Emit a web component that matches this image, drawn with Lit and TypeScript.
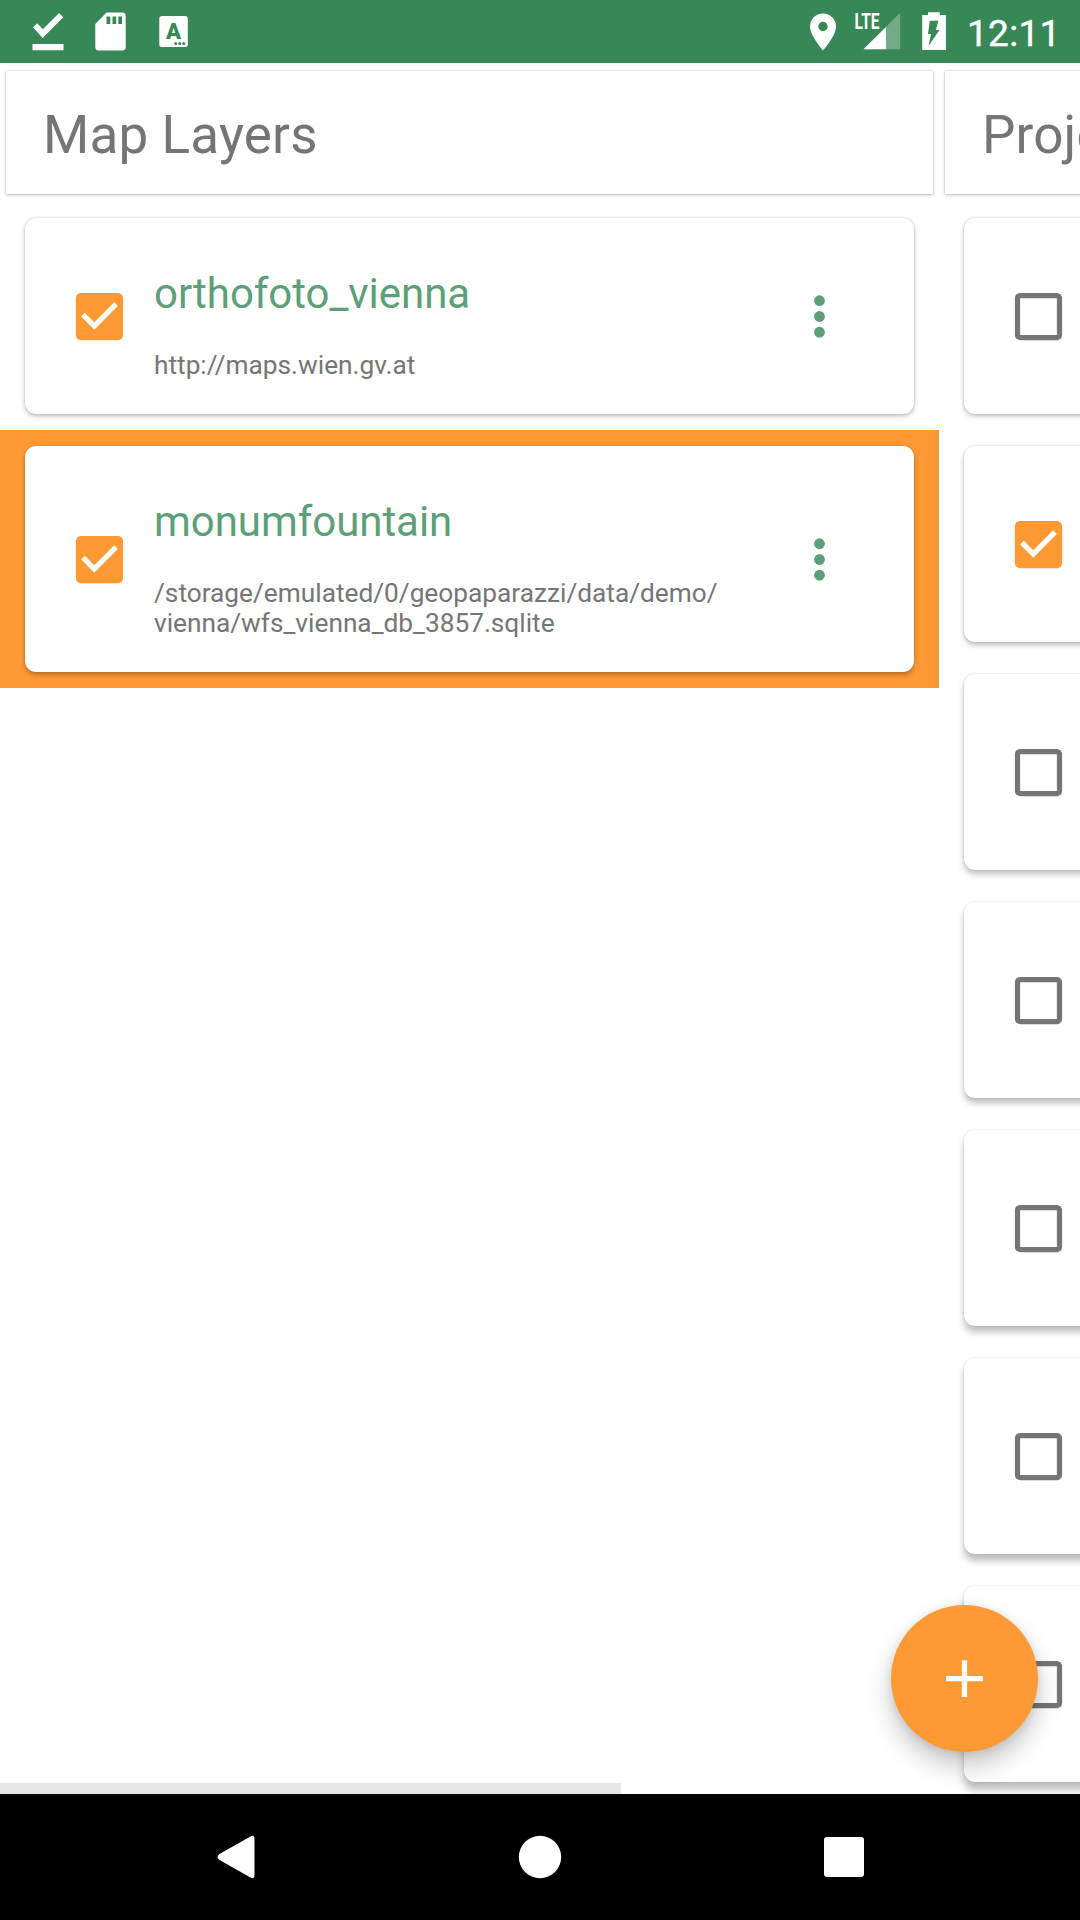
import { LitElement, html, css, svg } from "lit";
import { customElement, property } from "lit/decorators.js";
import { styleMap } from "lit/directives/style-map.js";

interface Layer {
  name: string;
  source: string;
  checked: boolean;
  selected?: boolean;
  /** How far the card's shadow drops, in pixels. */
  drop: number;
}

const MAP_LAYERS: Layer[] = [
  { name: "orthofoto_vienna", source: "http://maps.wien.gv.at", checked: true, drop: 2 },
  {
    name: "monumfountain",
    source: "/storage/emulated/0/geopaparazzi/data/demo/\u200Bvienna/wfs_vienna_db_3857.sqlite",
    checked: true,
    selected: true,
    drop: 3,
  },
];

const PROJECT_LAYERS: Layer[] = [2, 3, 4, 5, 6, 7, 8].map((drop, i) => ({
  name: "",
  source: "",
  checked: i === 1,
  drop,
}));

@customElement("status-bar")
export class StatusBar extends LitElement {
  static styles = css`
    :host {
      display: flex;
      justify-content: space-between;
      flex: none;
      height: 63px;
      background: #388757;
      color: #fff;
      font-family: Roboto, sans-serif;
    }
    .group {
      display: flex;
    }
    svg {
      display: block;
      flex: none;
      fill: #fff;
    }
    .cut {
      fill: #388757;
    }
    .faint {
      fill: #73ab89;
    }
    .glyph {
      font: 900 22px Roboto, sans-serif;
    }
    .lte {
      font: 700 22.5px Roboto, sans-serif;
    }
    .clock {
      width: 113px;
      font-size: 37px;
      font-weight: 400;
      letter-spacing: 0.3px;
      line-height: 67px;
      -webkit-text-stroke: 0.4px #fff;
      white-space: nowrap;
    }
  `;

  render() {
    return html`
      <div class="group">
        <svg width="80" height="63" viewBox="0 0 80 63">
          <path d="M32.5 44h31v6.300h-31zM33 27.300l4.200-4 5.600 5.900 16.300-16.200 4.200 4.300-20.600 20.700z" />
        </svg>
        <svg width="63" height="63" viewBox="80 0 63 63">
          <path d="M106.500 12.500h15.700q3.500 0 3.500 3.500v31q0 3.500-3.500 3.500H98.800q-3.500 0-3.500-3.500V24z" />
          <path class="cut" d="M106.500 16.500h3.800v7.500h-3.800zM112.500 16.500h3.700v7.500h-3.700zM118.300 16.500h3.700v7.500h-3.700z" />
        </svg>
        <svg width="63" height="63" viewBox="143 0 63 63">
          <rect x="159.300" y="16" width="28.500" height="31" rx="2.800" />
          <text class="cut glyph" x="173.500" y="39" text-anchor="middle">A</text>
          <circle class="cut" cx="175.700" cy="43.400" r="1.500" />
          <circle class="cut" cx="179.700" cy="43.400" r="1.500" />
          <circle class="cut" cx="183.700" cy="43.400" r="1.500" />
        </svg>
      </div>
      <div class="group">
        <svg width="48" height="63" viewBox="800 0 48 63">
          <path d="M823 13.500c-7.300 0-13 5.700-13 13C810 36 823 50.300 823 50.300S836 36 836 26.500c0-7.300-5.700-13-13-13z" />
          <circle class="cut" cx="823" cy="26.500" r="4.700" />
        </svg>
        <svg width="64" height="63" viewBox="848 0 64 63">
          <path class="faint" d="M863.500 49.300L900.200 12.800v36.500z" />
          <path d="M863.500 49.300L886 27v22.300z" />
          <text class="lte" x="854.500" y="29.300" textLength="25" lengthAdjust="spacingAndGlyphs">LTE</text>
        </svg>
        <svg width="55" height="63" viewBox="912 0 55 63">
          <path d="M928 12.300h11.800v2.700h6.100v34.900h-23.700V15h5.800z" />
          <path class="cut" d="M929.800 20.700h8.600l-2.600 9.300h3.600l-10.800 16 2.400-12h-3z" />
        </svg>
        <div class="clock">12:11</div>
      </div>
    `;
  }
}

@customElement("layer-card")
export class LayerCard extends LitElement {
  @property({ attribute: false }) layer!: Layer;

  static styles = css`
    :host {
      display: block;
      font-family: Roboto, sans-serif;
    }
    .row {
      padding: 16px 25px;
    }
    .row.selected {
      background: #ff9933;
    }
    .card {
      display: flex;
      align-items: center;
      min-height: 196px;
      box-sizing: border-box;
      padding-left: 43px;
      border-radius: 11px;
      background: #fff;
    }
    .box {
      flex: none;
      fill: #757575;
    }
    .box.on {
      fill: #ff9933;
    }
    .texts {
      flex: 1;
      align-self: flex-start;
      margin-left: 23px;
      padding: 51px 0 0;
    }
    .selected .texts {
      padding-bottom: 34px;
    }
    .name {
      font-size: 42px;
      line-height: 49px;
      letter-spacing: -0.05px;
      color: #5c9f78;
    }
    .source {
      margin-top: 32px;
      width: 600px;
      font-size: 26.250px;
      line-height: 30px;
      color: #757575;
    }
    .more {
      flex: none;
      margin-right: 63px;
      fill: #5c9f78;
    }
  `;

  render() {
    const { name, source, checked, selected, drop } = this.layer;
    const shadow = {
      boxShadow: `0 ${drop}px ${4 + drop / 2}px rgba(0,0,0,.26), 0 0 2px rgba(0,0,0,.16)`,
    };
    return html`
      <div class="row ${selected ? "selected" : ""}">
        <div class="card" style=${styleMap(shadow)}>
          <svg class="box ${checked ? "on" : ""}" width="63" height="63" viewBox="0 0 24 24">
            ${checked
              ? svg`<path d="M19 3H5c-1.110 0-2 .9-2 2v14c0 1.100.89 2 2 2h14c1.110 0 2-.9 2-2V5c0-1.100-.89-2-2-2zm-9 14l-5-5 1.410-1.410L10 14.170l7.590-7.590L19 8l-9 9z"/>`
              : svg`<path d="M19 5v14H5V5h14m0-2H5c-1.100 0-2 .9-2 2v14c0 1.100.9 2 2 2h14c1.100 0 2-.9 2-2V5c0-1.100-.9-2-2-2z"/>`}
          </svg>
          ${name
            ? html`
                <div class="texts">
                  <div class="name">${name}</div>
                  <div class="source">${source}</div>
                </div>
                <svg class="more" width="63" height="63" viewBox="0 0 24 24">
                  <circle cx="12" cy="6" r="2.050" />
                  <circle cx="12" cy="12" r="2.050" />
                  <circle cx="12" cy="18" r="2.050" />
                </svg>
              `
            : ""}
        </div>
      </div>
    `;
  }
}

@customElement("app-root")
export class AppRoot extends LitElement {
  static styles = css`
    :host {
      display: flex;
      flex-direction: column;
      position: relative;
      width: 1080px;
      height: 1920px;
      overflow: hidden;
      background: #fff;
      font-family: Roboto, sans-serif;
    }
    .board {
      flex: 1;
      min-height: 0;
      display: flex;
      overflow: hidden;
    }
    .column {
      flex: none;
      width: 939px;
    }
    .heading {
      box-sizing: border-box;
      height: 123px;
      margin: 8px 6px;
      padding-left: 37px;
      background: #fff;
      box-shadow: 0 1px 3px rgba(0, 0, 0, 0.24), 0 0 1px rgba(0, 0, 0, 0.3);
      font-size: 53px;
      letter-spacing: 0.15px;
      line-height: 128px;
      color: #757575;
      white-space: nowrap;
    }
    .scrollbar {
      position: absolute;
      left: 0;
      bottom: 126px;
      width: 621px;
      height: 11px;
      background: #e6e6e6;
    }
    .fab {
      position: absolute;
      right: 42px;
      bottom: 168px;
      width: 147px;
      height: 147px;
      display: flex;
      align-items: center;
      justify-content: center;
      border-radius: 50%;
      background: #ff9933;
      box-shadow: 0 14px 26px rgba(0, 0, 0, 0.22), 0 2px 8px rgba(0, 0, 0, 0.1);
    }
    .fab svg {
      fill: #fff;
    }
    .navbar {
      flex: none;
      position: relative;
      display: flex;
      align-items: center;
      justify-content: space-between;
      height: 126px;
      box-sizing: border-box;
      padding: 0 204px;
      background: #000;
    }
    .navbar svg {
      fill: #fff;
    }
  `;

  private column(title: string, layers: Layer[]) {
    return html`
      <section class="column">
        <div class="heading">${title}</div>
        ${layers.map((layer) => html`<layer-card .layer=${layer}></layer-card>`)}
      </section>
    `;
  }

  render() {
    return html`
      <status-bar></status-bar>
      <main class="board">
        ${this.column("Map Layers", MAP_LAYERS)} ${this.column("Project Layers", PROJECT_LAYERS)}
      </main>
      <nav class="navbar">
        <svg width="64" height="64" viewBox="0 0 64 64">
          <path d="M46.500 11.500Q50.500 9 50.500 14V50Q50.500 55 46.500 52.500L15.500 35Q11.500 32 15.500 29z" />
        </svg>
        <svg width="64" height="64" viewBox="0 0 64 64"><circle cx="32" cy="32" r="21.200" /></svg>
        <svg width="64" height="64" viewBox="0 0 64 64">
          <rect x="12" y="12" width="40" height="40" rx="3" />
        </svg>
      </nav>
      <div class="scrollbar"></div>
      <div class="fab">
        <svg width="63" height="63" viewBox="0 0 24 24"><path d="M19 13h-6v6h-2v-6H5v-2h6V5h2v6h6v2z" /></svg>
      </div>
    `;
  }
}
